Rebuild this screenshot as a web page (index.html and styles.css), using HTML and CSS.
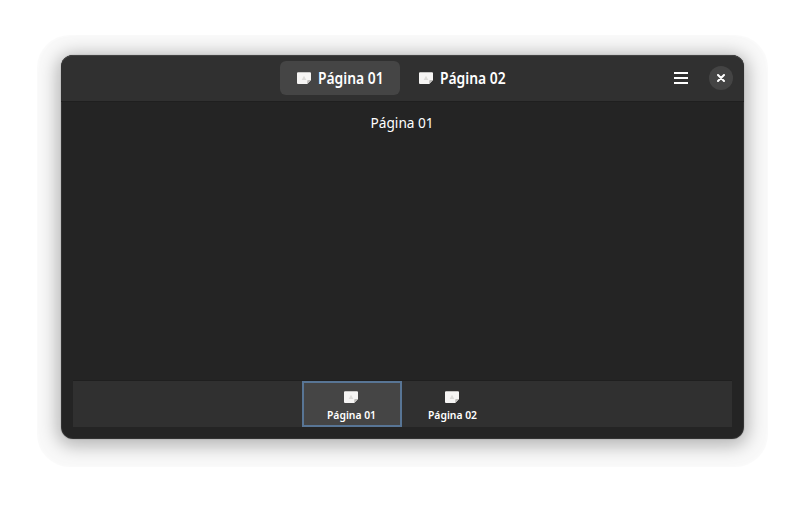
FILE: index.html
```html
<!DOCTYPE html>
<html lang="es">
<head>
<meta charset="utf-8">
<title>Página 01</title>
<link rel="stylesheet" href="styles.css">
</head>
<body>
<svg class="defs" aria-hidden="true">
  <symbol id="page" viewBox="0 0 14 12">
    <path d="M1 .3h12q1 0 1 1V8l-3.800 4H1q-1 0-1-1V1.300q0-1 1-1z" fill="#f6f5f4"/>
    <path d="M14 8l-3.800 4V9q0-1 1-1z" fill="#c0bfbc"/>
    <path d="M7 3.700L9.300 8H4.700z" fill="#dddcd9"/>
  </symbol>
</svg>
<main class="window">
  <header class="header">
    <nav class="switcher">
      <button class="tab active"><svg class="icon"><use href="#page"/></svg><span>Página 01</span></button>
      <button class="tab"><svg class="icon"><use href="#page"/></svg><span>Página 02</span></button>
    </nav>
    <div class="controls">
      <button class="menu" aria-label="Menu"><i></i><i></i><i></i></button>
      <button class="close" aria-label="Cerrar"><svg viewBox="0 0 8 8"><path d="M1 1l6 6M7 1L1 7"/></svg></button>
    </div>
  </header>
  <section class="content"><span>Página 01</span></section>
  <nav class="bar">
    <button class="item selected"><svg class="icon"><use href="#page"/></svg><span>Página 01</span></button>
    <button class="item"><svg class="icon"><use href="#page"/></svg><span>Página 02</span></button>
  </nav>
</main>
</body>
</html>
```
FILE: styles.css
```css
* { box-sizing: border-box; }
body {
  margin: 0;
  height: 506px;
  padding: 55px 61px 67px;
  overflow: hidden;
  background: #fff;
  color: #fff;
  font-family: "Noto Sans", sans-serif;
}
button {
  margin: 0;
  padding: 0;
  border: 0;
  background: none;
  color: inherit;
  font: inherit;
}
.defs { position: absolute; width: 0; height: 0; }
.window {
  display: flex;
  flex-direction: column;
  height: 384px;
  border-radius: 12px;
  background: #242424;
  box-shadow: inset 0 0 0 1px rgba(255,255,255,.07), 0 0 0 1px rgba(0,0,0,.05),
    0 3px 18px 4px rgba(0,0,0,.28), 0 4px 1px 24px rgba(0,0,0,.025);
}
.header {
  position: relative;
  display: flex;
  justify-content: center;
  height: 47px;
  padding: 6px 3px 0 0;
  border-radius: 12px 12px 0 0;
  background: #303030;
  box-shadow: inset 0 1px #424242, inset 0 -1px #1f1f1f;
}
.switcher { display: flex; gap: 2px; }
.tab {
  display: flex;
  align-items: center;
  justify-content: center;
  gap: 7px;
  width: 120px;
  height: 34px;
  border-radius: 6px;
  font-size: 15.2px;
  font-weight: 600;
}
.tab span {
  width: 65px;
  margin-top: -1px;
  white-space: nowrap;
  text-align: left;
  transform: scaleX(.912);
  transform-origin: left;
}
.active { background: #454545; }
.icon { width: 14px; height: 12px; flex: none; }
.controls {
  position: absolute;
  top: 11px;
  right: 11px;
  display: flex;
  align-items: center;
  gap: 21px;
}
.menu { display: flex; flex-direction: column; gap: 3px; width: 14px; }
.menu i { height: 2px; background: #fff; }
.close {
  display: grid;
  place-items: center;
  width: 24px;
  height: 24px;
  border-radius: 50%;
  background: #444;
}
.close svg { width: 8px; height: 8px; fill: none; stroke: #fff; stroke-width: 2; stroke-linecap: round; }
.content {
  flex: 1;
  padding-top: 9px;
  text-align: center;
  font-size: 15.2px;
  line-height: 22px;
}
.content span { display: inline-block; transform: scaleX(.9); }
.bar {
  display: flex;
  justify-content: center;
  height: 46px;
  margin: 0 12px 12px;
  padding-right: 1px;
  background: #303030;
  box-shadow: 0 -1px #1f1f1f;
}
.item {
  display: flex;
  flex-direction: column;
  align-items: center;
  width: 100px;
  height: 46px;
  padding-top: 10px;
  font-size: 11.2px;
  font-weight: 600;
  line-height: 14px;
}
.item span { margin-top: 5px; transform: scaleX(.925); }
.selected { padding-right: 2px; background: #454545; box-shadow: inset 0 0 0 2px #587595; }
```
